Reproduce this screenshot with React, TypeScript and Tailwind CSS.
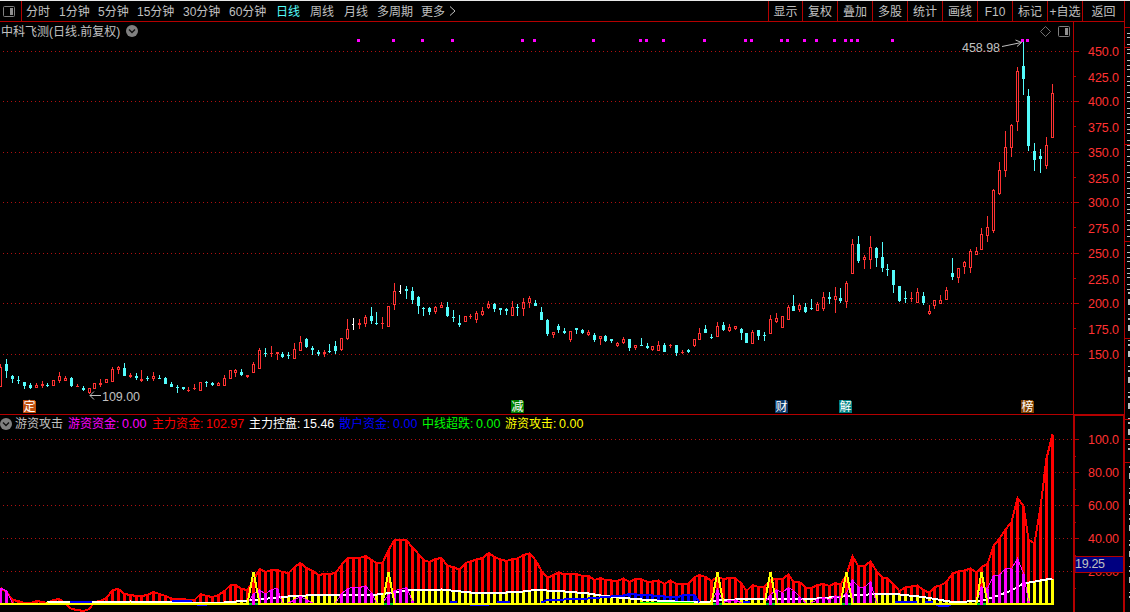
import React from "react";

const STEP = 5.8736;
const BASE = 604;
const FONT = "'Liberation Sans','Noto Sans CJK SC',sans-serif";
const barX = (i: number) => Math.ceil(STEP * i - 0.0001);

// kind, high, body top, body bottom, low
const CANDLES = `r 364 367 387 387|c 359 364 371 378|c 375 376 379 383|c 376 380 381 384|c 382 382 386 389|c 383 385 388 389|r 383 385 388 388|r 381 384 386 388|c 383 385 386 387|r 380 380 386 386
r 372 376 381 383|r 376 378 381 381|c 377 378 386 387|r 384 386 387 387|c 386 388 390 391|r 388 388 393 394|r 383 383 389 389|r 379 383 385 387|r 379 379 383 383|r 367 369 382 382
r 366 367 370 374|c 363 368 376 376|r 373 375 377 378|c 373 376 378 380|r 370 379 381 382|c 376 378 379 381|r 372 376 379 381|c 375 378 379 379|c 377 378 384 384|c 382 384 387 387
c 385 387 388 393|c 387 387 389 390|r 387 390 391 392|r 384 388 389 390|r 382 382 391 391|c 381 382 383 387|c 382 383 385 386|r 382 383 386 386|r 375 378 386 386|r 370 370 379 379
r 369 370 373 377|c 369 372 375 376|r 375 375 377 378|r 362 364 373 373|r 348 350 369 369|c 348 353 354 357|r 346 353 354 357|r 352 352 354 360|c 352 354 357 358|c 352 355 356 359
r 343 349 359 359|r 336 342 351 351|c 338 339 347 348|c 346 348 350 355|c 350 352 354 356|r 350 352 354 357|c 344 351 352 353|c 341 346 351 354|r 338 338 350 351|r 319 329 339 340
w 318 324 325 330|r 319 323 325 329|r 315 317 324 327|c 307 316 321 324|c 312 323 324 325|r 317 323 324 329|r 306 306 327 327|r 283 291 305 310|w 285 291 292 294|c 286 289 291 299
c 287 291 300 304|c 296 297 306 314|c 307 308 309 316|c 307 308 312 315|r 306 307 312 314|r 302 305 308 308|c 302 307 316 317|c 310 317 318 322|c 315 323 325 327|r 316 316 322 322
r 314 316 317 319|r 311 313 320 323|r 307 311 315 316|r 301 304 308 309|c 303 304 309 312|c 308 308 310 315|c 308 309 311 315|r 301 307 316 316|c 304 307 308 316|r 298 302 309 316
r 296 298 303 308|c 300 303 306 306|c 307 312 320 320|c 319 320 334 336|r 332 332 335 338|c 324 326 330 333|c 328 331 333 334|r 331 331 340 342|c 328 328 330 334|c 329 330 333 334
r 330 332 335 336|c 333 335 340 342|r 336 336 339 345|c 335 336 341 342|c 339 339 341 343|r 342 343 346 347|r 337 339 343 344|c 339 339 348 351|r 345 345 348 350|c 338 345 346 346
c 343 346 348 349|r 346 346 350 351|r 341 345 351 351|c 343 345 352 352|r 344 345 346 348|c 345 345 353 356|r 350 352 353 354|c 349 350 352 353|r 339 339 346 347|r 328 333 340 340
c 325 329 333 333|c 334 337 338 339|r 322 326 337 337|c 322 325 330 331|r 324 327 331 332|r 326 326 329 330|c 328 329 333 340|c 333 333 343 343|r 330 332 344 344|c 330 330 336 340
c 332 335 336 341|r 315 319 334 334|r 313 318 322 323|r 316 316 328 328|r 305 307 320 320|c 295 306 311 311|r 303 305 310 312|c 303 307 312 313|c 299 308 309 310|r 302 304 311 311
r 292 297 309 311|c 292 297 299 304|r 287 296 300 313|c 288 298 301 303|r 281 283 302 308|r 239 244 274 274|c 236 244 261 263|r 255 257 260 269|r 236 247 260 269|c 247 248 258 267
c 242 257 268 272|c 264 269 270 276|c 270 270 285 293|c 286 286 301 302|c 291 298 299 303|r 292 298 299 302|r 288 292 303 303|c 292 296 303 305|r 305 311 314 315|r 300 300 306 309
r 295 300 304 304|r 287 290 300 300|c 258 273 277 280|r 268 268 278 283|r 261 262 267 274|r 249 251 268 273|r 247 251 255 255|r 228 234 250 250|r 216 227 236 242|r 189 190 231 233
r 162 170 194 195|r 131 147 171 177|r 124 125 148 157|r 67 71 122 131|c 41 66 79 95|c 89 96 146 151|c 143 151 160 171|c 149 156 159 173|r 137 145 166 169|r 84 93 138 138`
  .split(/[|\n]/)
  .map((row) => {
    const [kind, ...v] = row.trim().split(" ");
    return { kind, v: v.map(Number) };
  });

// main capital curve, one y per bar
const MAIN = [
  588, 592, 600, 601, 603, 603, 601, 602, 603, 600, 599, 604, 609, 610, 611, 609, 602, 601, 598, 590,
  589, 594, 595, 596, 596, 595, 592, 594, 596, 598.5, 599, 599, 600, 600, 594, 596, 597, 595, 591, 585,
  585, 589, 590, 580, 569, 572, 570, 570, 572, 573, 567, 563, 568, 571, 575, 574, 574, 573, 565, 558,
  558, 558, 556, 560, 563, 563, 550, 540, 540, 540.5, 547.5, 554, 560, 562, 559, 558, 566, 567, 570, 563,
  561.5, 559.5, 558, 553, 557, 559.5, 561, 559, 558.5, 555, 553.5, 560, 571, 578, 575, 572.5, 574.5, 574, 574, 576,
  576, 580, 578, 580, 580.5, 581, 578.5, 582, 579, 579.5, 582, 581.5, 580.5, 584, 580.5, 584, 584.5, 584, 577, 575,
  577, 581, 577, 579, 578, 578.5, 583.5, 591, 585, 587, 587, 580, 579, 579, 574.5, 582, 582, 587.5, 588, 585,
  584, 586, 583, 584.5, 575, 556, 566.5, 566, 561.5, 571, 578, 578, 584.5, 591, 587.5, 586.5, 585.5, 590, 593, 587,
  585.5, 582, 573.5, 571.5, 570.5, 568.5, 572.5, 567, 564, 546, 538.5, 529.5, 522, 498, 506, 539.5, 543.5, 507, 458.5, 434.5,
];

// [bar, y] knots
type Knot = [number, number];
const CONTROL: Knot[] = [
  [8, 601.5], [16, 602.5], [22, 601.5], [29, 602.5], [38, 602.5], [41, 601], [44, 599.5], [47, 597.5],
  [49, 596.5], [52, 595.5], [55, 595], [63, 595], [65, 594], [67, 592], [70, 590], [75, 589.5], [80, 592.5],
  [86, 592.5], [89, 591.5], [91, 590], [95, 591], [100, 593.5], [102, 595.5], [106, 598], [109, 599.5],
  [113, 601], [118, 602.5], [120, 602], [123, 600], [127, 599], [138, 599], [142, 597], [145, 595.5],
  [149, 594], [153, 594.5], [157, 597], [160, 600], [162, 602], [167, 601], [170, 595], [172, 590.5],
  [174, 583.5], [177, 580.5], [179, 578.5],
];
const RETAIL: Knot[] = [
  [92, 602.5], [93, 600], [96, 599.5], [99, 599], [103, 597], [106, 595.5], [107, 594], [111, 595.5],
  [115, 597.5], [116, 595.5], [118, 595], [119, 602.5],
];
const HOT: Knot[][] = [
  [[0, 588], [1, 591], [2, 603]],
  [[42, 603], [43, 594], [44, 590], [45, 594], [46, 589.5], [47, 588.5], [48, 603]],
  [[49, 603], [50, 600], [51, 596.5], [52, 600], [53, 603]],
  [[57, 603], [58, 594], [59, 588.5], [60, 587.5], [61, 587.5], [62, 586], [63, 592.5], [64, 603]],
  [[65, 603], [66, 595], [67, 590.5], [68, 589.5], [69, 587.5], [70, 601]],
  [[121, 603], [122, 589.5], [123, 602], [124, 600.5], [125, 600], [126, 603]],
  [[130, 603], [131, 594.5], [132, 590], [133, 592.5], [134, 587.5], [135, 590.5], [136, 596.5], [137, 603]],
  [[138, 603], [139, 599.5], [140, 597.5], [141, 600], [142, 596], [143, 597], [144, 593.5], [145, 580], [146, 587], [147, 587], [148, 582], [149, 603]],
  [[166, 603], [167, 587], [168, 588.5], [169, 576], [170, 575], [171, 568.5], [172, 569], [173, 558.5], [174, 573.5], [175, 601]],
];
const SPIKES = [43, 66, 122, 131, 144, 167];
const SIGNALS = [
  358, 393, 422, 452, 522, 534, 593, 640, 646, 663, 704, 745, 751, 781, 787, 804, 816, 834, 845, 851, 857, 892,
  1022, 1027,
];
const EVENTS = [
  { x: 23, label: "定", color: "#c04e0c" },
  { x: 511, label: "减", color: "#008000" },
  { x: 775, label: "财", color: "#0c3a6c" },
  { x: 839, label: "解", color: "#008080" },
  { x: 1021, label: "榜", color: "#804000" },
];

const points = (knots: Knot[]) => knots.map(([i, y]) => `${barX(i) + 0.5},${y}`).join(" ");

function valueAt(knots: Knot[], i: number) {
  for (let k = 1; k < knots.length; k++) {
    const [a, ya] = knots[k - 1];
    const [b, yb] = knots[k];
    if (i >= a && i <= b) return ya + ((yb - ya) * (i - a)) / (b - a);
  }
  return BASE;
}

function PanelIcon() {
  return (
    <svg width="12" height="11" viewBox="0 0 12 11">
      <rect x="0.5" y="0.5" width="11" height="10" rx="1" fill="none" stroke="#808080" />
      <rect x="7" y="2" width="3" height="7" fill="#909090" />
    </svg>
  );
}

function DropIcon() {
  return (
    <svg width="12" height="12" viewBox="0 0 12 12" className="shrink-0">
      <circle cx="6" cy="6" r="6" fill="#808080" />
      <path d="M3 4.5l3 3 3-3" fill="none" stroke="#101010" strokeWidth="1.4" />
    </svg>
  );
}

function Toolbar() {
  return (
    <header className="flex h-[21px] shrink-0 border-b border-[#b40000] text-[12px] leading-[22px] text-[#c0c0c0] whitespace-nowrap">
      <div className="flex w-[22px] items-center border-r border-[#b40000] pl-[3px]">
        <PanelIcon />
      </div>
      <nav className="flex flex-1 pl-1">
        <span className="w-[33px]">分时</span>
        <span className="w-[39px]">1分钟</span>
        <span className="w-[39px]">5分钟</span>
        <span className="w-[46px]">15分钟</span>
        <span className="w-[46px]">30分钟</span>
        <span className="w-[47px]">60分钟</span>
        <span className="w-[34px] text-[#54fcfc]">日线</span>
        <span className="w-[34px]">周线</span>
        <span className="w-[33px]">月线</span>
        <span className="w-[44px]">多周期</span>
        <span className="flex gap-1">
          更多
          <svg width="7" height="10" viewBox="0 0 7 10" className="mt-[5px]">
            <path d="M1 0.5l5 4.5-5 4.5" fill="none" stroke="#c0c0c0" />
          </svg>
        </span>
      </nav>
      <div className="flex text-center">
        <span className="w-[34px] border-l border-[#b40000]">显示</span>
        {["复权", "叠加", "多股", "统计", "画线", "F10", "标记", "+自选"].map((label) => (
          <span key={label} className="w-[35px] border-l border-[#b40000]">{label}</span>
        ))}
        <span className="w-[42px] border-l border-[#b40000]">返回</span>
      </div>
    </header>
  );
}

function GridLine({ y }: { y: number }) {
  return <path d={`M3 ${y + 0.5}H1073`} stroke="#b01010" strokeDasharray="1 3" />;
}

function PriceChart() {
  const colors: Record<string, string> = { r: "#ff3232", c: "#54fcfc", w: "#ffffff" };
  return (
    <svg width="1073" height="376" viewBox="0 38 1073 376" shapeRendering="crispEdges" fontFamily={FONT} className="block">
      {[51, 101, 152, 202, 253, 303, 354].map((y) => (
        <GridLine key={y} y={y} />
      ))}
      {CANDLES.map(({ kind, v: [high, top, bottom, low] }, i) => {
        const x = barX(i);
        const color = colors[kind];
        const hollow = kind === "r" && bottom - top > 2;
        return (
          <g key={i} fill={color}>
            {kind === "w" ? (
              <rect x={x - 1} y={top} width="2" height={1} />
            ) : hollow ? (
              <rect x={x - 0.5} y={top + 0.5} width="2" height={bottom - top - 1} fill="none" stroke={color} />
            ) : (
              <rect x={x - 1} y={top} width="3" height={bottom - top} />
            )}
            {hollow ? (
              <>
                <rect x={x} y={high} width="1" height={top - high} />
                <rect x={x} y={bottom} width="1" height={Math.max(0, low - bottom)} />
              </>
            ) : (
              <rect x={x} y={high} width="1" height={low - high} />
            )}
          </g>
        );
      })}
      {SIGNALS.map((x) => (
        <rect key={x} x={x - 1} y="39" width="3" height="3" fill="#ff00ff" />
      ))}
      {EVENTS.map(({ x, label, color }) => (
        <g key={label}>
          <path d={`M${x} 400h11l2 2v11h-13z`} fill={color} />
          <text x={x + 0.5} y="411" fontSize="12" fill="#fff">{label}</text>
        </g>
      ))}
      <g fill="none" stroke="#c0c0c0" shapeRendering="auto">
        <path d="M101 395.5H90M94 391.5l-4 4 4 4" />
        <path d="M1002 46.5l19.5-4M1015.5 40l6 2.5-4.5 4" />
      </g>
      <g fill="#c0c0c0" fontSize="12.5">
        <text x="102" y="401" textLength="38">109.00</text>
        <text x="962" y="52" textLength="38">458.98</text>
      </g>
    </svg>
  );
}

function PriceAxis() {
  return (
    <svg width="50" height="392" viewBox="1074 22 50 392" fontFamily={FONT} className="block">
      {Array.from({ length: 13 }, (_, i) => {
        const y = Math.floor(51 + i * 25.25);
        return (
          <g key={i}>
            <rect x="1074" y={y} width={i % 2 ? 2 : 5} height="1" fill="#b40000" />
            <text x="1088" y={y + (i % 2 ? 6 : 5)} fontSize="12.5" fill="#ff3232" textLength="31">
              {(450 - i * 25).toFixed(1)}
            </text>
          </g>
        );
      })}
    </svg>
  );
}

function CapitalChart() {
  return (
    <svg width="1073" height="180" viewBox="0 432 1073 180" shapeRendering="crispEdges" className="block">
      {[439, 472, 505, 538, 571].map((y) => (
        <GridLine key={y} y={y} />
      ))}
      {MAIN.map((y, i) => {
        if (y >= BASE) return null;
        return <rect key={i} x={barX(i) - 1} y={y} width="3" height={BASE - y} fill="#ff0000" />;
      })}
      <polyline points={MAIN.map((y, i) => `${barX(i) + 0.5},${y}`).join(" ")} fill="none" stroke="#ff0000" strokeWidth="2" />
      {MAIN.map((_, i) => {
        const y = valueAt(RETAIL, i);
        return <rect key={i} x={barX(i) - 1} y={y} width="3" height={BASE - y} fill="#0000ff" />;
      })}
      {MAIN.map((_, i) => {
        const y = valueAt(CONTROL, i);
        return <rect key={i} x={barX(i) - 1} y={y} width="3" height={BASE - y} fill="#ffff00" />;
      })}
      <polyline points={points(CONTROL)} fill="none" stroke="#ffffff" strokeWidth="2" />
      <polyline points={points(RETAIL)} fill="none" stroke="#0000ff" strokeWidth="2" />
      {HOT.map((knots, n) => (
        <g key={n} fill="#ff00ff">
          {knots.map(([i, y]) => (
            <rect key={i} x={barX(i) - 1} y={y} width="3" height={BASE - y} />
          ))}
          <polyline points={points(knots)} fill="none" stroke="#ff00ff" />
        </g>
      ))}
      <path
        d="M70 602h22M172 601h20M450 602h7M497 601.5h13M743 602h7M895 602h22M925 602h8"
        stroke="#0000ff"
        strokeWidth="2"
      />
      <path d="M640 602h54" stroke="#00ff00" />
      <path d="M0 604H1054" stroke="#ffff00" strokeWidth="2" />
      <path d="M197 605.5h10M470 605.5h19" stroke="#0000ff" />
      <path d="M935 605h17l-4 2h-9z" fill="#0000ff" />
      {SPIKES.map((i) => (
        <g key={i}>
          <rect x={barX(i) - 4} y="603" width="9" height="2" fill="#00e020" />
          <rect x={barX(i) - 1} y="600" width="3" height="5" fill="#ff00ff" />
          <path
            d={`M${barX(i - 1) + 0.5} 603L${barX(i) + 0.5} 572L${barX(i + 1) + 0.5} 603`}
            fill="none"
            stroke="#ffff00"
            strokeWidth="2"
          />
        </g>
      ))}
    </svg>
  );
}

function CapitalAxis() {
  return (
    <svg width="48" height="196" viewBox="1075 416 48 196" fontFamily={FONT} fontSize="12.5" className="block">
      {["100.0", "80.00", "60.00", "40.00", "20.00"].map((label, i) => (
        <g key={label}>
          <rect x="1075" y={439 + i * 33} width="4" height="1" fill="#b40000" />
          <rect x="1075" y={456 + i * 33} width="1" height="1" fill="#b40000" />
          <text x="1088" y={444 + i * 33} fill="#ff3232" textLength="31">{label}</text>
        </g>
      ))}
      <rect x="1075" y="556.5" width="49" height="16" fill="#000080" stroke="#b40000" />
      <text x="1075" y="568" fill="#c0c0c0" textLength="30">19.25</text>
    </svg>
  );
}

function Legend() {
  return (
    <div className="flex h-[17px] items-center text-[12px] leading-[17px] text-[#c0c0c0] whitespace-nowrap">
      <DropIcon />
      <span className="ml-[3px] w-[53px] pt-px">游资攻击</span>
      <Metric className="w-[84px] text-[#ff00ff]" name="游资资金" value="0.00" />
      <Metric className="w-[97px] text-[#ff0000]" name="主力资金" value="102.97" />
      <Metric className="w-[90px] text-white" name="主力控盘" value="15.46" />
      <Metric className="w-[83px] text-[#0000ff]" name="散户资金" value="0.00" />
      <Metric className="w-[83px] text-[#00ff00]" name="中线超跌" value="0.00" />
      <Metric className="w-[83px] text-[#ffff00]" name="游资攻击" value="0.00" />
    </div>
  );
}

function Metric({ className, name, value }: { className: string; name: string; value: string }) {
  return (
    <span className={`flex pt-px ${className}`}>
      <span className="w-[54px]">{name}:</span>
      <span className="text-[12.5px]">{value}</span>
    </span>
  );
}

// edge of the neighbouring quote panel
function SideStrip() {
  return (
    <svg width="5" height="611" viewBox="1125 1 5 611" shapeRendering="crispEdges" className="block">
      <path d="M1128.5 33V290" stroke="#c0c0c0" strokeWidth="3" strokeDasharray="1 3 1 6 1 4" />
      <path d="M1129 292V450M1129.5 466V600" stroke="#c0c0c0" strokeWidth="2" strokeDasharray="2 5 6 9 1 3" />
      <path
        d="M1125 27.5h5M1125 47.5h5M1125 144.5h5M1125 241.5h5M1125 338.5h5M1125 419.5h5M1125 439.5h5M1125 462.5h5"
        stroke="#b40000"
      />
    </svg>
  );
}

export default function App() {
  return (
    <div className="flex h-[612px] w-[1130px] overflow-hidden border-t border-[#e8e8e8] bg-black font-['Liberation_Sans','Noto_Sans_CJK_SC',sans-serif]">
      <div className="flex w-[1124px] flex-col">
        <Toolbar />
        <section className="flex h-[393px] shrink-0 border-b border-[#b40000]">
          <div className="w-[1073px]">
            <div className="flex h-[16px] items-center pt-[2px] pr-[3px] text-[12px] leading-[16px] text-[#c0c0c0]">
              <span className="mr-[5px] w-[121px] whitespace-nowrap pt-px pl-px">中科飞测(日线.前复权)</span>
              <DropIcon />
              <div className="ml-auto flex items-center gap-[7px]">
                <svg width="11" height="11" viewBox="0 0 11 11">
                  <path d="M5.5 0.5l5 5-5 5-5-5z" fill="none" stroke="#707070" />
                </svg>
                <PanelIcon />
              </div>
            </div>
            <PriceChart />
          </div>
          <div className="w-[51px] border-l border-[#b40000]">
            <PriceAxis />
          </div>
        </section>
        <section className="flex flex-1">
          <div className="w-[1073px]">
            <Legend />
            <CapitalChart />
          </div>
          <div className="w-[51px] border-t border-r border-l-2 border-[#b40000]">
            <CapitalAxis />
          </div>
        </section>
      </div>
      <div className="w-[6px] border-l border-[#b40000]">
        <SideStrip />
      </div>
    </div>
  );
}
